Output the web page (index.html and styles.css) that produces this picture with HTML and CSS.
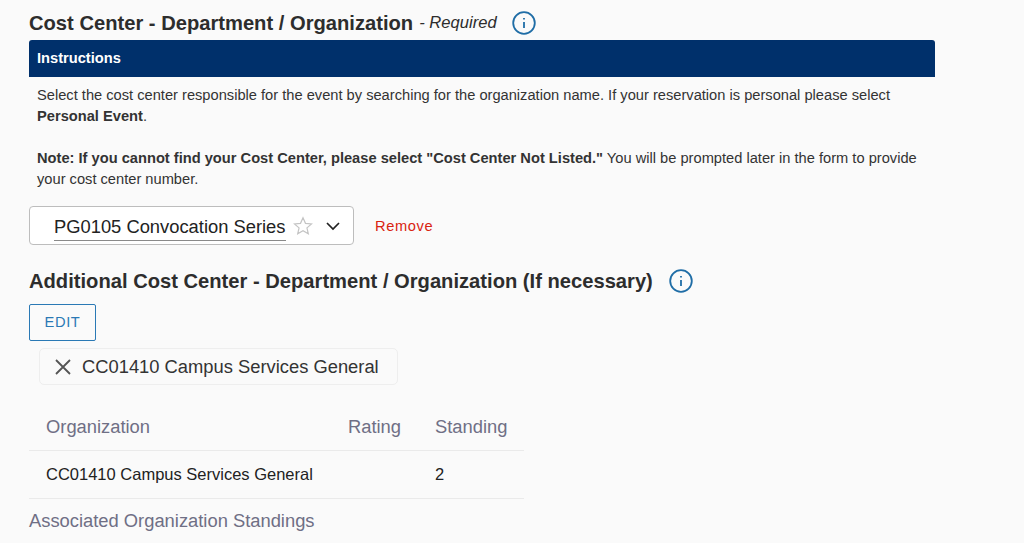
FILE: index.html
```html
<!DOCTYPE html>
<html lang="en">
<head>
<meta charset="utf-8">
<title>Cost Center</title>
<link rel="stylesheet" href="styles.css">
</head>
<body>
<main class="page">
  <h2 class="heading heading-first">Cost Center - Department / Organization <em class="req">- Required</em>
    <svg class="info info-first" viewBox="0 0 24 24"><circle cx="12" cy="12" r="10.8"/><line x1="12" y1="11" x2="12" y2="17"/><line x1="12" y1="7" x2="12" y2="8.6"/></svg>
  </h2>
  <section class="panel">
    <div class="panel-head">Instructions</div>
    <div class="panel-body">
      <p class="para">Select the cost center responsible for the event by searching for the organization name. If your reservation is personal please select <b>Personal Event</b>.</p>
      <p class="para"><b>Note: If you cannot find your Cost Center, please select "Cost Center Not Listed."</b> You will be prompted later in the form to provide your cost center number.</p>
    </div>
  </section>
  <div class="select-row">
    <div class="select">
      <span class="select-text">PG0105 Convocation Series</span>
      <svg class="star" viewBox="0 0 24 24"><path d="M12 3l2.7 6.1 6.6.6-5 4.4 1.5 6.5-5.8-3.4-5.8 3.4 1.5-6.5-5-4.4 6.6-.6z"/></svg>
      <svg class="chev" viewBox="0 0 16 10"><path d="M2 2l6 6 6-6"/></svg>
    </div>
    <span class="remove">Remove</span>
  </div>
  <h2 class="heading heading-second">Additional Cost Center - Department / Organization (If necessary)
    <svg class="info info-second" viewBox="0 0 24 24"><circle cx="12" cy="12" r="10.8"/><line x1="12" y1="11" x2="12" y2="17"/><line x1="12" y1="7" x2="12" y2="8.6"/></svg>
  </h2>
  <button class="edit" type="button">EDIT</button>
  <div class="chip">
    <svg class="x" viewBox="0 0 16 16"><path d="M1 1l14 14M15 1L1 15"/></svg>
    <span>CC01410 Campus Services General</span>
  </div>
  <table class="table">
    <thead>
      <tr><th class="col-org">Organization</th><th class="col-rating">Rating</th><th class="col-standing">Standing</th></tr>
    </thead>
    <tbody>
      <tr><td>CC01410 Campus Services General</td><td></td><td>2</td></tr>
    </tbody>
  </table>
  <div class="caption">Associated Organization Standings</div>
</main>
</body>
</html>
```
FILE: styles.css
```css
html, body { margin: 0; padding: 0; height: 543px; overflow: hidden; background: #fafafa; }
body { font-family: "Liberation Sans", Arial, sans-serif; color: #2b2b2b; }
.page { padding: 11px 0 0 29px; width: 906px; }
.heading { margin: 0; font-size: 20.16px; line-height: 24px; font-weight: 700; color: #2d2d2d; display: flex; align-items: center; white-space: nowrap; }
.req { font-size: 16.6px; font-weight: 400; font-style: italic; margin-left: 6px; }
.info { width: 24px; height: 24px; fill: none; stroke: #1f6da6; stroke-width: 1.8; }
.info-first { margin-left: 15px; }
.info-second { margin-left: 16px; }
.panel-head { margin-top: 5px; height: 37px; box-sizing: border-box; background: #00306b; color: #fff; font-size: 14.67px; font-weight: 700; line-height: 36px; padding-left: 8px; border-radius: 3px 3px 0 0; }
.panel-body { padding: 8px 8px 0; font-size: 14.67px; line-height: 21px; color: #333; }
.para { margin: 0 0 21px; }
.select-row { display: flex; align-items: center; margin-top: -5px; }
.select { width: 325px; height: 39px; box-sizing: border-box; background: #fff; border: 1px solid #bdbdbd; border-radius: 4px; display: flex; align-items: center; padding-left: 24px; }
.select-text { margin-top: 4px; font-size: 18.35px; line-height: 26px; color: #222; border-bottom: 1px solid #8a8a8a; white-space: nowrap; width: 232px; box-sizing: border-box; overflow: hidden; }
.star { width: 22px; height: 22px; fill: #fff; stroke: #c4c4c4; stroke-width: 1.3; margin-left: 6px; flex: none; }
.chev { width: 16px; height: 10px; fill: none; stroke: #222; stroke-width: 1.7; margin-left: 11px; flex: none; }
.remove { margin-left: 21px; font-size: 14.67px; color: #d9230f; letter-spacing: .6px; }
.heading-second { margin-top: 24px; }
.edit { display: block; margin-top: 11px; width: 67px; height: 37px; background: transparent; border: 1px solid #2a79b5; border-radius: 2px; color: #2a79b5; font: 14.67px "Liberation Sans", Arial, sans-serif; letter-spacing: .6px; padding: 0 0 2px; }
.chip { display: flex; align-items: center; margin: 7px 0 0 10px; width: 359px; height: 37px; box-sizing: border-box; border: 1px solid #eeeeee; border-radius: 5px; padding-left: 15px; font-size: 18.35px; color: #333; }
.x { width: 16px; height: 16px; fill: none; stroke: #555; stroke-width: 1.8; margin-right: 11px; flex: none; }
.table { border-collapse: collapse; width: 495px; margin-top: 18px; table-layout: fixed; }
.table th { font-size: 18.35px; font-weight: 400; color: #6f6f85; text-align: left; height: 47px; padding: 0; border-bottom: 1px solid #eaeaea; }
.table td { font-size: 16.5px; color: #222; height: 47px; padding: 0; border-bottom: 1px solid #eaeaea; }
.col-org { width: 302px; }
.col-rating { width: 87px; }
.table th:first-child, .table td:first-child { padding-left: 17px; }
.caption { margin-top: 10px; font-size: 18.35px; line-height: 24px; color: #6f6f85; }
```
